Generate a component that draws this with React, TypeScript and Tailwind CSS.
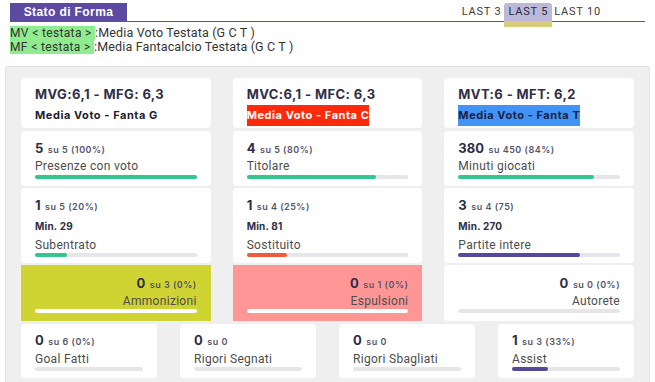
import React from 'react'

type Stat = {
  value: string
  of: string
  min?: string
  label: string
  pct: number
  bar: string
  bg?: string
  track?: string
  right?: boolean
}

function Bar({ pct, bar, track }: { pct: number; bar: string; track?: string }) {
  return (
    <div className={`h-[4px] w-full rounded-full ${track ?? 'bg-[#e6e6ea]'}`}>
      <div className={`h-full rounded-full ${bar}`} style={{ width: `${pct}%` }} />
    </div>
  )
}

// spacing per card kind: [top padding, label margin, bar margin]
const spacing = {
  plain: ['pt-[8px]', 'mt-0', 'mt-[1px]'],
  min: ['pt-[8px]', 'mt-[3px]', 'mt-0'],
  color: ['pt-[9px]', 'mt-0', 'mt-0'],
  bottom: ['pt-[7px]', 'mt-[1px]', 'mt-0'],
}

function StatCard({ s, kind, className = '' }: { s: Stat; kind: keyof typeof spacing; className?: string }) {
  const [pt, lm, bm] = spacing[kind]
  return (
    <div className={`${s.bg ?? 'bg-white rounded-[4px]'} px-[14px] ${pt} ${s.right ? 'text-right' : ''} ${className}`}>
      <div className="font-['Inter',sans-serif] text-[#2e2e44] leading-[16px]">
        <span className="text-[13px] font-bold">{s.value}</span>{' '}
        <span className="text-[9px] font-semibold tracking-[0.5px] text-[#55556a]">{s.of}</span>
      </div>
      {s.min && (
        <div className="mt-[3px] font-['Inter',sans-serif] text-[10px] font-bold tracking-[0.2px] text-[#2e2e44] leading-[16px]">{s.min}</div>
      )}
      <div className={`${lm} font-['Roboto',sans-serif] text-[12px] tracking-[0.3px] text-[#4d4d4d] leading-[16px]`}>
        {s.label}
      </div>
      <div className={bm}>
        <Bar pct={s.pct} bar={s.bar} track={s.track} />
      </div>
    </div>
  )
}

function HeadCard({ title, sub, tag }: { title: string; sub: string; tag: string }) {
  return (
    <div className="bg-white rounded-[4px] px-[14px] pt-[8px] h-[50px]">
      <div className="font-['Inter',sans-serif] text-[13px] font-bold tracking-[0.4px] text-[#2e2e48] leading-[16px]">{title}</div>
      <div className={`inline-block py-[3px] font-['Inter',sans-serif] text-[11px] font-bold tracking-[0.55px] leading-[15px] ${tag}`}>{sub}</div>
    </div>
  )
}

const columns = [
  {
    title: 'MVG:6,1 - MFG: 6,3',
    sub: 'Media Voto - Fanta G',
    tag: 'text-[#1e1e30]',
    stats: [
      { value: '5', of: 'su 5 (100%)', label: 'Presenze con voto', pct: 100, bar: 'bg-[#34c68c]' },
      { value: '1', of: 'su 5 (20%)', min: 'Min. 29', label: 'Subentrato', pct: 20, bar: 'bg-[#34c68c]' },
      { value: '0', of: 'su 3 (0%)', label: 'Ammonizioni', pct: 0, bar: 'bg-white', bg: 'bg-[#cfd433]', track: 'bg-white', right: true },
    ] as Stat[],
  },
  {
    title: 'MVC:6,1 - MFC: 6,3',
    sub: 'Media Voto - Fanta C',
    tag: 'bg-[#ff2a0c] text-white',
    stats: [
      { value: '4', of: 'su 5 (80%)', label: 'Titolare', pct: 80, bar: 'bg-[#34c68c]' },
      { value: '1', of: 'su 4 (25%)', min: 'Min. 81', label: 'Sostituito', pct: 25, bar: 'bg-[#ef5b3e]' },
      { value: '0', of: 'su 1 (0%)', label: 'Espulsioni', pct: 0, bar: 'bg-white', bg: 'bg-[#ff9696]', track: 'bg-white', right: true },
    ] as Stat[],
  },
  {
    title: 'MVT:6 - MFT: 6,2',
    sub: 'Media Voto - Fanta T',
    tag: 'bg-[#4193f5] text-[#1e1e40]',
    stats: [
      { value: '380', of: 'su 450 (84%)', label: 'Minuti giocati', pct: 84, bar: 'bg-[#34c68c]' },
      { value: '3', of: 'su 4 (75)', min: 'Min. 270', label: 'Partite intere', pct: 75, bar: 'bg-[#56499b]' },
      { value: '0', of: 'su 0 (0%)', label: 'Autorete', pct: 0, bar: 'bg-[#56499b]', right: true },
    ] as Stat[],
  },
]

const bottom: Stat[] = [
  { value: '0', of: 'su 6 (0%)', label: 'Goal Fatti', pct: 0, bar: 'bg-[#56499b]' },
  { value: '0', of: 'su 0', label: 'Rigori Segnati', pct: 0, bar: 'bg-[#56499b]' },
  { value: '0', of: 'su 0', label: 'Rigori Sbagliati', pct: 0, bar: 'bg-[#56499b]' },
  { value: '1', of: 'su 3 (33%)', label: 'Assist', pct: 33, bar: 'bg-[#56499b]' },
]

export default function App() {
  return (
    <div className="w-[655px] h-[382px] overflow-hidden bg-white font-['Roboto',sans-serif]">
      {/* Header tabs */}
      <div className="mx-[10px] pt-[3px] flex items-end justify-between border-b-[1.5px] border-[#5a5a70] h-[22px]">
        <div className="bg-[#5b4aa0] text-white font-['Liberation_Sans',sans-serif] font-bold text-[12px] tracking-[0.4px] h-[18px] w-[117px] flex items-center justify-center">
          Stato di Forma
        </div>
        <div className="flex items-end text-[11px] text-[#3c3c3c] mr-[44px] tracking-[0.8px]">
          <span className="h-[18px] flex items-center pr-[3px]">LAST 3</span>
          <div className="relative">
            <span className="h-[18px] flex items-center bg-[#bcb8da] rounded-t-[3px] px-[4px] text-[#2a2a40]">LAST 5</span>
            <div className="absolute left-0 right-0 top-[18px] h-[6px] bg-[#d6cc7c]" />
          </div>
          <span className="h-[18px] flex items-center pl-[2px]">LAST 10</span>
        </div>
      </div>

      {/* Legend */}
      <div className="pl-[10px] pt-[4px] text-[12.5px] leading-[13px] tracking-[0.15px] text-[#333]">
        <div>
          <span className="bg-[#8fec8f] text-[12px] tracking-[0.35px]">MV &lt; testata &gt; </span>:Media Voto Testata (G C T )
        </div>
        <div>
          <span className="bg-[#8fec8f] text-[12px] tracking-[0.35px]">MF &lt; testata &gt; </span>:Media Fantacalcio Testata (G C T )
        </div>
      </div>

      {/* Panel */}
      <div className="mt-[12px] mx-[5px] h-[332px] bg-[#efeff0] border border-[#e2e2e4] rounded-[2px] px-[15px] pt-[11px]">
        <div className="grid grid-cols-3 gap-x-[22px]">
          {columns.map((c) => (
            <div key={c.title} className="flex flex-col">
              <HeadCard title={c.title} sub={c.sub} tag={c.tag} />
              <StatCard s={c.stats[0]} kind="plain" className="mt-[3px] h-[55px]" />
              <StatCard s={c.stats[1]} kind="min" className="mt-[2px] h-[75px]" />
              <StatCard s={c.stats[2]} kind="color" className="mt-[2px] h-[56px]" />
            </div>
          ))}
        </div>
        <div className="mt-[3px] grid grid-cols-4 gap-x-[23px]">
          {bottom.map((s) => (
            <StatCard key={s.label} s={s} kind="bottom" className="h-[54px]" />
          ))}
        </div>
      </div>
    </div>
  )
}
